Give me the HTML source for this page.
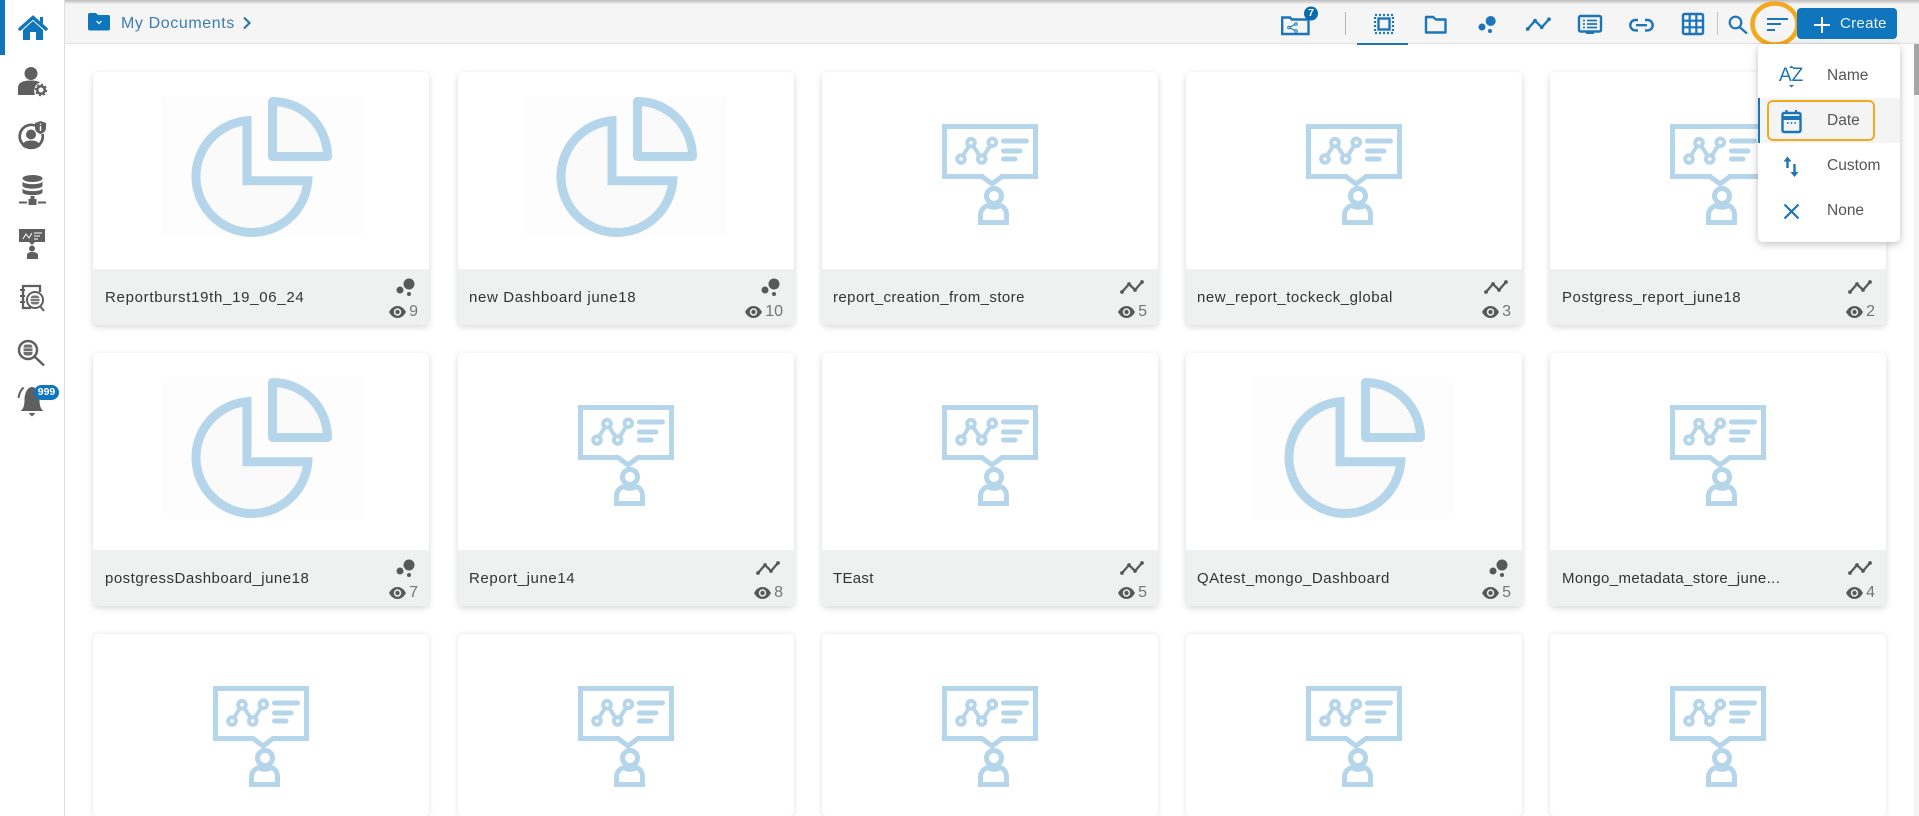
<!DOCTYPE html>
<html lang="en"><head><meta charset="utf-8"><title>My Documents</title>
<style>
html,body{margin:0;padding:0;width:1919px;height:816px;overflow:hidden;background:#fff;font-family:"Liberation Sans",sans-serif}
#page{position:relative;width:1919px;height:816px;overflow:hidden;background:#fff}
.abs,svg.abs{position:absolute}
#side{position:absolute;left:0;top:0;width:64px;height:816px;background:#fff;border-right:1px solid #dedede;box-sizing:content-box}
#top{position:absolute;left:65px;top:0;width:1854px;height:43px;background:#f5f5f5;border-bottom:1px solid #e2e2e2}
#shade{position:absolute;left:0;top:0;width:1919px;height:4px;background:linear-gradient(#bdbdbd,#eeeeee)}
.card{position:absolute;width:336px;height:253px;background:#fff;border-radius:5px;box-shadow:0 2px 7px rgba(0,0,0,.16);overflow:hidden}
.card.r3{height:182px;box-shadow:0 0 6px rgba(0,0,0,.12)}
.card svg.img{position:absolute;left:0;top:0;width:336px;height:197px}
.foot{position:absolute;left:0;top:197px;width:336px;height:56px;background:#eff0f0}
.title{position:absolute;left:12px;top:18px;font-size:15px;line-height:22px;letter-spacing:.5px;color:#333;white-space:nowrap}
.ty{position:absolute;right:13px;top:8px;width:26px;height:20px}
.ct{position:absolute;right:11px;top:33px;font-size:16px;line-height:20px;color:#767676;display:flex;align-items:center;gap:3px}
.ct svg{width:17px;height:12px}
#menu{position:absolute;left:1758px;top:44px;width:142px;height:198px;background:#fff;border-radius:5px;box-shadow:0 2px 8px rgba(0,0,0,.25)}
.mi{position:absolute;left:69px;font-size:15.5px;line-height:20px;color:#555}
</style></head><body><div id="page">

<svg width="0" height="0" style="position:absolute">
<defs>
<symbol id="pie" viewBox="0 0 336 197">
<rect x="68" y="25" width="201" height="140" fill="#fdfdfd"/>
<path d="M154 48.700A56 56 0 1 0 214.800 108.700H154Z" fill="#fafafa" stroke="#b5d5ea" stroke-width="9"/>
<path d="M179.500 29.500A55 55 0 0 1 234.500 84.500H179.500Z" fill="#fafafa" stroke="#b5d5ea" stroke-width="9" stroke-linejoin="round"/>
</symbol>
<symbol id="pres" viewBox="0 0 336 197">
<g fill="none" stroke="#b5d5ea">
<path d="M122.500 54.500H213.500V104.500H180L170 112L160 104.500H122.500Z" stroke-width="5"/>
<circle cx="172" cy="124" r="7.500" stroke-width="5"/>
<path d="M158.500 150.500V143C158.500 138 162 134.500 166 133.500C169 136 175 136 178 133.500C182 134.500 184.500 138 184.500 143V150.500H158.500Z" stroke-width="5"/>
<path d="M139 87L149 70.700L159.700 87L170.300 70.300" stroke-width="4"/>
<circle cx="139" cy="87" r="3.800" stroke-width="4" fill="#fff"/>
<circle cx="149" cy="70.700" r="3.800" stroke-width="4" fill="#fff"/>
<circle cx="159.700" cy="87" r="3.800" stroke-width="4" fill="#fff"/>
<circle cx="170.300" cy="70.300" r="3.800" stroke-width="4" fill="#fff"/>
<path d="M181.500 69H204.500M181.500 79H198M181.500 87H193" stroke-width="5" stroke-linecap="round"/>
</g>
</symbol>
<symbol id="bub" viewBox="0 0 26 20">
<circle cx="19" cy="7" r="5.500" fill="#595959"/><circle cx="10" cy="13" r="3.500" fill="#595959"/><circle cx="19" cy="17" r="2" fill="#595959"/>
</symbol>
<symbol id="lin" viewBox="0 0 26 20">
<path d="M3 15L10 7L16 13L23 5" fill="none" stroke="#595959" stroke-width="2.300"/>
<g fill="#595959"><circle cx="3" cy="15" r="1.900"/><circle cx="10" cy="7" r="1.900"/><circle cx="16" cy="13" r="1.900"/><circle cx="23" cy="5" r="1.900"/></g>
</symbol>
<symbol id="eye" viewBox="0 0 17 12">
<path d="M0 6C2.500 1.500 5.500 0 8.500 0S14.500 1.500 17 6C14.500 10.500 11.500 12 8.500 12S2.500 10.500 0 6Z" fill="#595959"/>
<circle cx="8.500" cy="6" r="3.700" fill="#eff0f0"/><circle cx="8.500" cy="6" r="2.200" fill="#595959"/>
</symbol>
</defs>
</svg>

<div id="top"></div>
<div id="shade"></div>

<!-- sidebar -->
<div id="side"></div>
<div class="abs" style="left:0;top:0;width:5px;height:55px;background:#0f75bc"></div>
<svg class="abs" style="left:0;top:0" width="64" height="430" viewBox="0 0 64 430">
<!-- home -->
<path d="M20 29L33 17.500L46 29" fill="none" stroke="#0f75bc" stroke-width="3.500" stroke-linecap="round"/>
<path d="M23 30L33 21L43 30V40H36V32H30V40H23ZM40 17h3v7l-3-2.500Z" fill="#0f75bc"/>
<!-- user gear -->
<g fill="#5f5f5f">
<circle cx="31" cy="73.500" r="6.500"/>
<path d="M18 95V88C18 83 22 80.500 31 80.500C35 80.500 38 81 40 82.500C35 84 33 90 35 95Z"/>
<circle cx="41" cy="90" r="3.800" fill="none" stroke="#5f5f5f" stroke-width="2.500"/>
<circle cx="41" cy="90" r="5.500" fill="none" stroke="#5f5f5f" stroke-width="1.500" stroke-dasharray="2 2.300"/>
<!-- info user -->
<path d="M35 125.500A11.500 11.500 0 1 0 42.500 134" fill="none" stroke="#5f5f5f" stroke-width="2.700"/>
<circle cx="31" cy="134.500" r="5"/>
<path d="M22 146C23 142 26 140.500 31 140.500S39 142 40.500 146C35 150 27 150 22 146Z"/>
<path d="M35 123L40.500 121L46 123V128C46 131 43.500 133 40.500 134C37.500 133 35 131 35 128Z"/>
</g>
<path d="M39.800 123.500h1.400v1.400h-1.400ZM39.800 126h1.400v5h-1.400Z" fill="#fff"/>
<g fill="#5f5f5f">
<!-- db -->
<ellipse cx="32.500" cy="178.500" rx="10" ry="3.500"/>
<path d="M22.500 181.500C24 185 41 185 42.500 181.500V186C41 189.500 24 189.500 22.500 186ZM22.500 188.500C24 192 41 192 42.500 188.500V192.500C41 196 24 196 22.500 192.500Z"/>
<rect x="30.500" y="196" width="4" height="5"/><rect x="28.500" y="199" width="8" height="6"/>
<rect x="19" y="201.500" width="8" height="2"/><rect x="38" y="201.500" width="8" height="2"/>
<!-- presentation -->
<rect x="19" y="229" width="26" height="13"/>
<path d="M29 242H35L32 245Z"/>
<circle cx="32" cy="248.500" r="3"/>
<path d="M27 259V255C27 253 29 252 32 252S38 253 38 255V259Z"/>
</g>
<path d="M23 239L26 234L29 238L32 233M34 233H42M34 236H40M34 239H38" fill="none" stroke="#fff" stroke-width="1"/>
<!-- doc search -->
<path d="M40 292V286H23V308H31" fill="none" stroke="#5f5f5f" stroke-width="2.300"/>
<path d="M20 290h5M20 296h5M20 302h5" stroke="#5f5f5f" stroke-width="2"/>
<circle cx="35" cy="300" r="8" fill="#fff" stroke="#5f5f5f" stroke-width="2"/>
<path d="M40 306L44 311" stroke="#5f5f5f" stroke-width="2"/>
<rect x="30.500" y="295.500" width="9" height="9" rx="3" fill="#777"/>
<path d="M30.500 298.500h9M30.500 301.500h9" stroke="#fff" stroke-width=".8"/>
<!-- search db -->
<circle cx="28" cy="350" r="9" fill="#fff" stroke="#5f5f5f" stroke-width="2.500"/>
<path d="M35 357L44 365.500" stroke="#5f5f5f" stroke-width="2.500"/>
<rect x="23.500" y="344.500" width="9" height="11" rx="2.500" fill="#6f6f6f"/>
<path d="M23.500 348h9M23.500 351.500h9" stroke="#fff" stroke-width=".8"/>
<!-- bell -->
<path d="M20.500 411C23.500 409 24.500 405 24.500 400C24.500 393 27.500 387 32 387S39.500 393 39.500 400C39.500 405 40.500 409 43.500 411Z" fill="#5f5f5f"/>
<path d="M28.500 413H35.500L32 416.500Z" fill="#5f5f5f"/>
<path d="M18.500 398C19 393 21 390 23.500 387.500M45.500 398C45 393 43 390 40.500 387.500" fill="none" stroke="#5f5f5f" stroke-width="2"/>
</svg>
<div class="abs" style="left:34px;top:385px;width:25px;height:15px;border-radius:8px;background:#0f75bc;color:#fff;font-size:10.500px;font-weight:bold;line-height:15px;text-align:center">999</div>

<!-- breadcrumb -->
<svg class="abs" style="left:88px;top:13px" width="22" height="18" viewBox="0 0 22 18">
<path d="M0 2a2 2 0 0 1 2-2H8L10 2H20a2 2 0 0 1 2 2V15.500a2 2 0 0 1-2 2H2a2 2 0 0 1-2-2Z" fill="#0f75bc"/>
<path d="M8.500 8L11 10.500L13.500 8" fill="none" stroke="#fff" stroke-width="1.200"/>
</svg>
<div class="abs" style="left:121px;top:14px;font-size:16px;line-height:20px;letter-spacing:.6px;color:#3d7cb0;white-space:nowrap">My Documents</div>
<svg class="abs" style="left:242px;top:16px" width="10" height="14" viewBox="0 0 10 14"><path d="M2 1.500L7.500 7L2 12.500" fill="none" stroke="#2f77ad" stroke-width="2.200"/></svg>

<!-- toolbar icons -->
<svg class="abs" style="left:1270px;top:0" width="640" height="50" viewBox="1270 0 640 50">
<g fill="none" stroke="#1b75b8" stroke-width="2.400">
<path d="M1282.200 34V17.500H1290L1292 19.500H1308.500V34Z"/>
<circle cx="1289" cy="27.500" r="1.300" stroke-width="1"/><circle cx="1296" cy="24" r="1.300" stroke-width="1"/><circle cx="1296" cy="31" r="1.300" stroke-width="1"/>
<path d="M1290 27L1295 24.500M1290 28L1295 30.500" stroke-width="1"/>
<!-- select -->
<rect x="1378.500" y="18.500" width="11" height="11" stroke-width="2.400"/>
<rect x="1375" y="15" width="18" height="18" stroke-width="2.200" stroke-dasharray="2 2"/>
<!-- folder -->
<path d="M1426 32.500V17H1433L1436 19.500H1445.500V32.500Z" stroke-linejoin="round"/>
<!-- line -->
<path d="M1527.700 29L1535 20.700L1541.700 27.300L1549 19.300"/>
<!-- monitor -->
<rect x="1579" y="16" width="22" height="15.500" rx="1.500"/>
<path d="M1583 20.500h2M1587 20.500h10M1583 24h2M1587 24h10M1583 27.500h2M1587 27.500h10" stroke-width="1.700"/>
<!-- link -->
<path d="M1638 20H1635.500a5.200 5.200 0 0 0 0 10.400H1638M1645 20H1647.500a5.200 5.200 0 0 1 0 10.400H1645M1636 25.200H1647" stroke-width="2.400"/>
<!-- grid -->
<rect x="1683" y="14" width="20" height="20" rx="1.500"/>
<path d="M1689.700 14V34M1696.300 14V34M1683 20.700H1703M1683 27.300H1703" stroke-width="2.200"/>
<!-- search -->
<circle cx="1735.500" cy="22.500" r="5.800" stroke-width="2.200"/>
<path d="M1739.500 27L1747 33.500" stroke-width="2.200"/>
<!-- sort -->
<path d="M1767 19H1788M1767 24H1781M1767 30H1775" stroke-width="2"/>
</g>
<rect x="1345" y="12" width="1" height="23" fill="#b5b5b5"/>
<rect x="1717" y="12" width="1" height="23" fill="#c4c4c4"/>
<rect x="1357" y="43" width="51" height="2" fill="#1b75b8"/>
<g fill="#1b75b8">
<circle cx="1490.700" cy="21" r="5"/><circle cx="1482" cy="27" r="3.500"/><circle cx="1490" cy="31" r="2"/>
<circle cx="1527.700" cy="29" r="1.900"/><circle cx="1535" cy="20.700" r="1.900"/><circle cx="1541.700" cy="27.300" r="1.900"/><circle cx="1549" cy="19.300" r="1.900"/>
<rect x="1586" y="32" width="8" height="2"/>
</g>
<circle cx="1311" cy="13.500" r="7" fill="#0c6bb0"/>
<ellipse cx="1775" cy="24" rx="22.500" ry="20.500" fill="none" stroke="#f2a91e" stroke-width="4.500"/>
</svg>
<div class="abs" style="left:1304px;top:6px;width:14px;text-align:center;font-size:10.500px;line-height:15px;font-weight:bold;color:#fff">7</div>

<!-- create -->
<div class="abs" style="left:1797px;top:8px;width:100px;height:31px;background:#0f75bc;border-radius:4px"></div>
<svg class="abs" style="left:1814px;top:17px" width="16" height="16" viewBox="0 0 16 16"><path d="M8 0V16M0 8H16" stroke="#fff" stroke-width="2"/></svg>
<div class="abs" style="left:1840px;top:14px;font-size:15px;line-height:19px;letter-spacing:.3px;color:#eaf3fa">Create</div>

<!-- cards -->
<div class="card" style="left:93px;top:72px"><svg class="img"><use href="#pie"/></svg><div class="foot"><div class="title" style="letter-spacing:.7px">Reportburst19th_19_06_24</div><svg class="ty"><use href="#bub"/></svg><div class="ct"><svg><use href="#eye"/></svg>9</div></div></div>
<div class="card" style="left:458px;top:72px"><svg class="img"><use href="#pie"/></svg><div class="foot"><div class="title" style="left:11px;letter-spacing:.65px">new Dashboard june18</div><svg class="ty"><use href="#bub"/></svg><div class="ct"><svg><use href="#eye"/></svg>10</div></div></div>
<div class="card" style="left:822px;top:72px"><svg class="img"><use href="#pres"/></svg><div class="foot"><div class="title" style="left:11px;letter-spacing:.42px">report_creation_from_store</div><svg class="ty"><use href="#lin"/></svg><div class="ct"><svg><use href="#eye"/></svg>5</div></div></div>
<div class="card" style="left:1186px;top:72px"><svg class="img"><use href="#pres"/></svg><div class="foot"><div class="title" style="left:11px;letter-spacing:.53px">new_report_tockeck_global</div><svg class="ty"><use href="#lin"/></svg><div class="ct"><svg><use href="#eye"/></svg>3</div></div></div>
<div class="card" style="left:1550px;top:72px"><svg class="img"><use href="#pres"/></svg><div class="foot"><div class="title">Postgress_report_june18</div><svg class="ty"><use href="#lin"/></svg><div class="ct"><svg><use href="#eye"/></svg>2</div></div></div>

<div class="card" style="left:93px;top:353px"><svg class="img"><use href="#pie"/></svg><div class="foot"><div class="title">postgressDashboard_june18</div><svg class="ty"><use href="#bub"/></svg><div class="ct"><svg><use href="#eye"/></svg>7</div></div></div>
<div class="card" style="left:458px;top:353px"><svg class="img"><use href="#pres"/></svg><div class="foot"><div class="title" style="left:11px;letter-spacing:.6px">Report_june14</div><svg class="ty"><use href="#lin"/></svg><div class="ct"><svg><use href="#eye"/></svg>8</div></div></div>
<div class="card" style="left:822px;top:353px"><svg class="img"><use href="#pres"/></svg><div class="foot"><div class="title" style="left:11px;letter-spacing:.3px">TEast</div><svg class="ty"><use href="#lin"/></svg><div class="ct"><svg><use href="#eye"/></svg>5</div></div></div>
<div class="card" style="left:1186px;top:353px"><svg class="img"><use href="#pie"/></svg><div class="foot"><div class="title" style="left:11px">QAtest_mongo_Dashboard</div><svg class="ty"><use href="#bub"/></svg><div class="ct"><svg><use href="#eye"/></svg>5</div></div></div>
<div class="card" style="left:1550px;top:353px"><svg class="img"><use href="#pres"/></svg><div class="foot"><div class="title" style="letter-spacing:.38px">Mongo_metadata_store_june...</div><svg class="ty"><use href="#lin"/></svg><div class="ct"><svg><use href="#eye"/></svg>4</div></div></div>

<div class="card r3" style="left:93px;top:634px"><svg class="img"><use href="#pres"/></svg></div>
<div class="card r3" style="left:458px;top:634px"><svg class="img"><use href="#pres"/></svg></div>
<div class="card r3" style="left:822px;top:634px"><svg class="img"><use href="#pres"/></svg></div>
<div class="card r3" style="left:1186px;top:634px"><svg class="img"><use href="#pres"/></svg></div>
<div class="card r3" style="left:1550px;top:634px"><svg class="img"><use href="#pres"/></svg></div>

<!-- scrollbar -->
<div class="abs" style="left:1914px;top:44px;width:5px;height:772px;background:#f4f4f4"></div>
<div class="abs" style="left:1914px;top:44px;width:5px;height:51px;background:#a6a6a6"></div>

<!-- menu -->
<div id="menu">
<div class="abs" style="left:0;top:54px;width:142px;height:45px;background:#f4f4f4"></div>
<div class="abs" style="left:0;top:54px;width:2px;height:45px;background:#1b75b8"></div>
<div class="abs" style="left:9px;top:56px;width:104px;height:37px;border:2px solid #f2a91e;border-radius:6px"></div>
<div class="mi" style="top:22px">Name</div>
<div class="mi" style="top:67px">Date</div>
<div class="mi" style="top:112px">Custom</div>
<div class="mi" style="top:157px">None</div>
<div class="abs" style="left:21px;top:22px;font-size:19px;line-height:20px;color:#1b75b8">AZ</div>
<svg class="abs" style="left:0;top:0" width="60" height="198" viewBox="1758 44 60 198">
<g fill="#1b75b8">
<path d="M1791.500 65.500L1794 68H1789ZM1791.500 87.500L1794 85H1789Z"/>
</g>
<g fill="none" stroke="#1b75b8" stroke-width="2.400">
<rect x="1782.500" y="113" width="18" height="19" rx="1.500"/>
<path d="M1782.500 118H1800.500" stroke-width="4"/>
<path d="M1786.500 110V114M1796 110V114" stroke-width="2.200"/>
<path d="M1787 123h1.500M1790.700 123h1.500M1794.400 123h1.500" stroke-width="1.700"/>
<path d="M1787.500 168V159M1794.500 164V175" stroke-width="2.400"/>
<path d="M1784.500 204.500L1798.500 218.500M1798.500 204.500L1784.500 218.500" stroke-width="2.200"/>
</g>
<path d="M1787.500 156.500L1791.500 161.500H1783.500ZM1794.500 177L1798.500 172H1790.500Z" fill="#1b75b8"/>
</svg>
</div>
</div></body></html>
